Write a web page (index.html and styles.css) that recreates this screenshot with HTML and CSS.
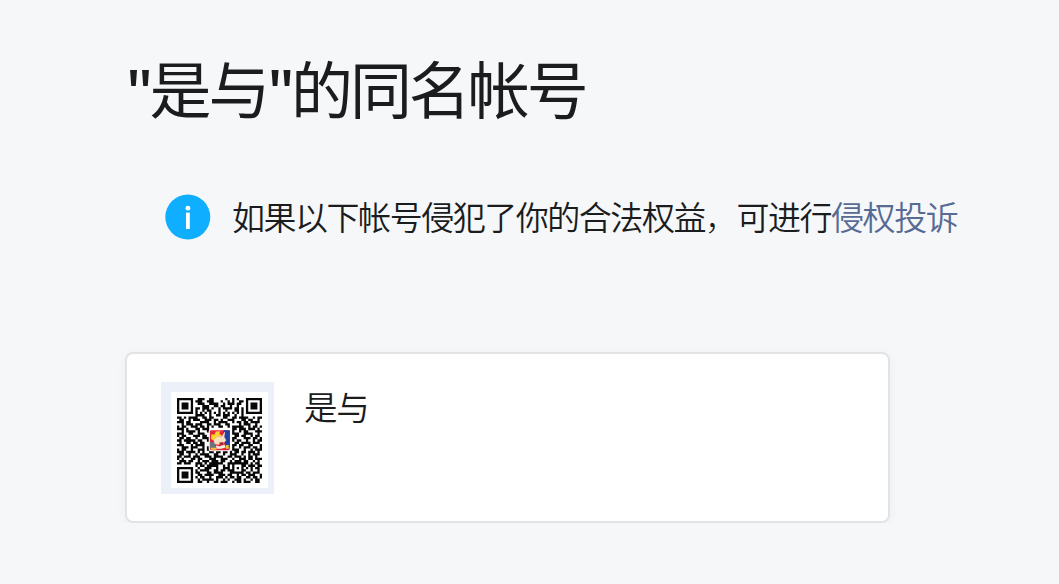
FILE: index.html
```html
<!DOCTYPE html>
<html lang="zh-CN">
<head>
  <meta charset="UTF-8">
  <meta name="viewport" content="width=device-width, initial-scale=1.0">
  <title>同名帐号</title>
  <link rel="stylesheet" href="styles.css">
</head>
<body>
  <main class="page">
    <h1 class="title"><span class="quote">"</span>是与<span class="quote">"</span>的同名帐号</h1>

    <div class="tips">
      <svg class="tips-icon" viewBox="0 0 46 46" aria-hidden="true">
        <circle cx="22.8" cy="23" r="22.5" fill="#10aeff"/>
        <circle cx="22.9" cy="14.2" r="2.4" fill="#fff"/>
        <rect x="21" y="18.6" width="3.8" height="16.4" fill="#fff"/>
      </svg>
      <p class="tips-text">如果以下帐号侵犯了你的合法权益<span class="comma">，</span>可进行<a class="link" href="#">侵权投诉</a></p>
    </div>

    <section class="account">
      <div class="qrcode">
        <svg class="qrcode-img" viewBox="0 0 37 37">
          <path id="qr" fill="#080808"/>
          <g class="avatar">
            <rect x="13.8" y="13.5" width="9.7" height="9.7" rx="1" fill="#fff"/>
            <rect x="14.3" y="14" width="8.7" height="8.7" rx=".6" fill="#e3263c"/>
            <path d="M20.2 14H23v7.2h-1.7l-1-3z" fill="#263fa7"/>
            <path d="M14.3 19.2h2.6v2.6h-2.6z" fill="#70737d"/>
            <path d="M14.8 17.9l.2-2.1 1.3.2.6-1.4 1.9-.1-.4 1.2 1.4.6-2.1.5-1.4 1.8z" fill="#f6d52b"/>
            <path d="M15.9 18.4l1.8-1.7 1.9-.1 1.1-1.9.2.3-.3 2 .8 1.4-1.2 1.4-2.3.5-1.5-.4z" fill="#f8dfc0"/>
            <path d="M17 20.6l1.4.5 2.3-.9.5 1.4-2 .5h-2z" fill="#f5eee4"/>
            <path d="M18.4 19.4l1.9-.3-.4 1.2-1.2.2z" fill="#a92835"/>
            <path d="M14.7 21.7h2.5v.8h-2.5zM21.3 20.5h1.2v1.6h-1.2z" fill="#eac92f"/>
          </g>
        </svg>
      </div>
      <strong class="account-name">是与</strong>
    </section>
  </main>
  <script>
    const rows = [
      '1111111001110011000001001010001111111',
      '1000001011100111000100101001101000001',
      '1011101001110011110010111011001011101',
      '1011101000011100110110010010001011101',
      '1011101011011101001011110110101011101',
      '1000001010010110001001000110101000001',
      '1111111010101010101010101010101111111',
      '0000000011110010011011100100100000000',
      '1101011110011011000011001101111001011',
      '0110010111001110110100111000110110010',
      '1110110000111100101111001011011011110',
      '0010111011100110111001100001011100100',
      '1011001110110101001100101111100101101',
      '1110100011011100000000001101110111010',
      '0010111101000110000000001001011000111',
      '1110011001110000000000001110011110010',
      '1011000111011000000000000110110010110',
      '0110110010011100000000001100011101101',
      '1101111101100100000000001011001001011',
      '0100110110110000000000000110111101110',
      '1110001011110000000000001101100110001',
      '0011101110010100000000001001011101101',
      '1011001001110110000000001110010010111',
      '1110111101010011011011010110110111010',
      '0110010010111100110010011100100101110',
      '1101110111001110111100110111010110100',
      '1010001101100011100111001001110110111',
      '0111011001011101110110010111011001010',
      '1101110011101011111100111111111010110',
      '0000000010110111110010101000110111011',
      '1111111001001110010011101010101010110',
      '1000001010111100110110111000110010010',
      '1011101011000110111100011111101101110',
      '1011101001101111001110110010110111001',
      '1011101010110010011101011011001101101',
      '1000001001011111010010100111010010110',
      '1111111001100100110111001011011100110'
    ];
    let d = '';
    rows.forEach((row, y) => {
      for (const run of row.matchAll(/1+/g)) {
        d += `M${run.index} ${y}h${run[0].length}v1h-${run[0].length}z`;
      }
    });
    document.querySelector('#qr').setAttribute('d', d);
  </script>
</body>
</html>
```
FILE: styles.css
```css
* {
    box-sizing: border-box;
}

body {
    margin: 0;
    background: #f6f7f9;
    color: #1b1c1e;
    font-family: "Open Sans", "Noto Sans CJK SC", sans-serif;
    font-weight: 350;
}

.page {
    padding: 46px 0 0 125px;
}

.title {
    margin: 0;
    height: 90px;
    padding-left: 1px;
    line-height: 88px;
    font-size: 62px;
    font-weight: 400;
    letter-spacing: -3.1px;
    white-space: nowrap;
}

.quote {
    font-weight: 600;
    letter-spacing: -3.4px;
}

.tips {
    display: flex;
    align-items: center;
    gap: 21px;
    height: 46px;
    margin-top: 58px;
    padding-left: 40px;
}

.tips-icon {
    flex: none;
    width: 46px;
    height: 46px;
}

.tips-text {
    margin: 0;
    padding-top: 2px;
    font-size: 33px;
    letter-spacing: -1.47px;
    line-height: 44px;
    white-space: nowrap;
}

.comma {
    font-weight: 300;
}

.link {
    color: #576b95;
    text-decoration: none;
}

.account {
    display: flex;
    gap: 30px;
    width: 765px;
    height: 171px;
    margin-top: 112px;
    padding: 28px 34px;
    background: #fff;
    border: 2px solid #e2e3e4;
    border-radius: 8px;
    box-shadow: 0 2px 12px rgba(0, 0, 0, 0.04);
}

.qrcode {
    width: 113px;
    height: 112px;
    padding: 6px;
    background: #fff;
    border: solid #ecf1f9;
    border-width: 10px 6px 6px 10px;
}

.qrcode-img {
    display: block;
    width: 85px;
    height: 85px;
}

.account-name {
    height: 50px;
    line-height: 50px;
    font-size: 33.5px;
    font-weight: 350;
    letter-spacing: -1.2px;
}
```
